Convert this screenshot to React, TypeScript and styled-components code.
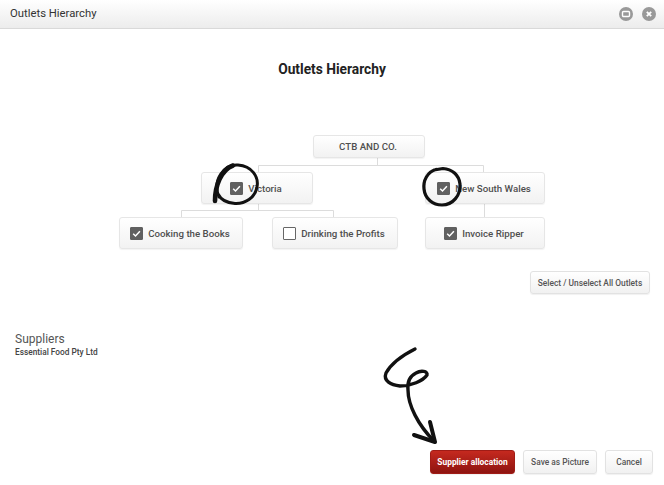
import React from "react";
import styled, { createGlobalStyle } from "styled-components";

const Global = createGlobalStyle`
  html, body { margin: 0; padding: 0; background: #fff; }
  body { font-family: Roboto, "Liberation Sans", sans-serif; color: #333; }
`;

const Page = styled.div`
  position: relative;
  width: 664px;
  height: 485px;
  overflow: hidden;
  display: flex;
  flex-direction: column;
  background: #fff;
`;

const Header = styled.header`
  height: 29px;
  flex: none;
  display: flex;
  align-items: center;
  justify-content: space-between;
  padding: 0 8px 1px 10px;
  box-sizing: border-box;
  background: linear-gradient(#ffffff, #ececec);
  border-bottom: 1px solid #d9d9d9;
`;

const HeaderTitle = styled.div`
  font-size: 11.3px;
  color: #333;
`;

const HeaderActions = styled.div`
  display: flex;
  gap: 9.5px;
`;

const RoundIcon = styled.svg`
  width: 14px;
  height: 14px;
  display: block;
`;

const Main = styled.main`
  flex: 1;
  display: flex;
  flex-direction: column;
`;

const Heading = styled.h1`
  margin: 31px 0 0;
  height: 18px;
  line-height: 18px;
  text-align: center;
  font-size: 13.75px;
  font-weight: 700;
  color: #222;
`;

const Diagram = styled.div`
  position: relative;
  height: 114px;
  margin-top: 57px;
  flex: none;
`;

const Lines = styled.svg`
  position: absolute;
  inset: 0;
  width: 664px;
  height: 114px;
`;

const Node = styled.div<{ $x: number; $y: number; $w: number; $h: number }>`
  position: absolute;
  left: ${(p) => p.$x}px;
  top: ${(p) => p.$y}px;
  width: ${(p) => p.$w}px;
  height: ${(p) => p.$h}px;
  box-sizing: border-box;
  display: flex;
  align-items: center;
  justify-content: center;
  gap: 5px;
  padding-right: 2px;
  background: linear-gradient(#ffffff, #f2f2f2);
  border: 1px solid #e6e6e6;
  border-radius: 3px;
  box-shadow: 0 1px 1px rgba(0, 0, 0, 0.05);
  font-size: 9.7px;
  font-weight: 500;
  color: #4f4f4f;
  white-space: nowrap;
`;

const Box = styled.span<{ $checked: boolean }>`
  width: 13px;
  height: 13px;
  box-sizing: border-box;
  flex: none;
  border-radius: 1px;
  display: flex;
  background: ${(p) => (p.$checked ? "#606060" : "#fff")};
  border: 1px solid ${(p) => (p.$checked ? "#606060" : "#666")};
`;

const BoxTick = styled.svg`
  width: 11px;
  height: 11px;
  display: block;
`;

const SelectRow = styled.div`
  display: flex;
  justify-content: flex-end;
  padding-right: 14px;
  margin-top: 22px;
`;

const Button = styled.button<{ $primary?: boolean; $w: number; $h: number }>`
  width: ${(p) => p.$w}px;
  height: ${(p) => p.$h}px;
  padding: 0;
  box-sizing: border-box;
  font-family: inherit;
  font-size: ${(p) => (p.$primary ? 8.4 : 8.4)}px;
  font-weight: ${(p) => (p.$primary ? 700 : 500)};
  border-radius: 3px;
  white-space: nowrap;
  color: ${(p) => (p.$primary ? "#fff" : "#555")};
  background: ${(p) =>
    p.$primary ? "linear-gradient(#c5291f, #8e1410)" : "linear-gradient(#ffffff, #f1f1f1)"};
  border: 1px solid ${(p) => (p.$primary ? "#a01c16" : "#e2e2e2")};
  box-shadow: 0 1px 1px rgba(0, 0, 0, 0.06);
`;

const Suppliers = styled.section`
  margin: 38px 0 0 15px;
`;

const SuppliersTitle = styled.div`
  font-size: 12px;
  line-height: 15px;
  color: #555;
`;

const SuppliersItem = styled.div`
  font-size: 8.3px;
  line-height: 11px;
  font-weight: 500;
  color: #444;
`;

const Footer = styled.footer`
  margin-top: auto;
  margin-bottom: 11px;
  padding-right: 11px;
  display: flex;
  justify-content: flex-end;
  gap: 8px;
`;

const Ink = styled.svg`
  position: absolute;
  inset: 0;
  width: 664px;
  height: 485px;
  pointer-events: none;
`;

const Check = ({ checked = true }: { checked?: boolean }) => (
  <Box $checked={checked}>
    {checked && (
      <BoxTick viewBox="0 0 11 11">
        <path d="M2.2 5.8 L4.5 8 L8.9 3.2" fill="none" stroke="#fff" strokeWidth="1.5" />
      </BoxTick>
    )}
  </Box>
);

export default function App() {
  return (
    <Page>
      <Global />
      <Header>
        <HeaderTitle>Outlets Hierarchy</HeaderTitle>
        <HeaderActions>
          <RoundIcon viewBox="0 0 14 14">
            <circle cx="7" cy="7" r="7" fill="#999" />
            <rect x="3.5" y="4.5" width="7" height="5" rx="1" fill="none" stroke="#fff" strokeWidth="1.4" />
          </RoundIcon>
          <RoundIcon viewBox="0 0 14 14">
            <circle cx="7" cy="7" r="7" fill="#999" />
            <path d="M4.8 4.8 L9.2 9.2 M9.2 4.8 L4.8 9.2" stroke="#fff" strokeWidth="1.8" />
          </RoundIcon>
        </HeaderActions>
      </Header>
      <Main>
        <Heading>Outlets Hierarchy</Heading>
        <Diagram>
          <Lines viewBox="0 0 664 114">
            <path
              d="M377.5 23 V30.5 M258.5 37 V30.5 H483.5 V37 M258.5 69 V75.5 M181.5 82 V75.5 H333.5 V82 M484.5 69 V82"
              fill="none"
              stroke="#dcdcdc"
            />
          </Lines>
          <Node $x={313} $y={0} $w={112} $h={23}>CTB AND CO.</Node>
          <Node $x={201} $y={37} $w={112} $h={32}><Check />Victoria</Node>
          <Node $x={425} $y={37} $w={120} $h={32}><Check />New South Wales</Node>
          <Node $x={119} $y={82} $w={124} $h={32}><Check />Cooking the Books</Node>
          <Node $x={272} $y={82} $w={126} $h={32}><Check checked={false} />Drinking the Profits</Node>
          <Node $x={425} $y={82} $w={120} $h={32}><Check />Invoice Ripper</Node>
        </Diagram>
        <SelectRow>
          <Button $w={120} $h={23}>Select / Unselect All Outlets</Button>
        </SelectRow>
        <Suppliers>
          <SuppliersTitle>Suppliers</SuppliersTitle>
          <SuppliersItem>Essential Food Pty Ltd</SuppliersItem>
        </Suppliers>
        <Footer>
          <Button $primary $w={85} $h={24}>Supplier allocation</Button>
          <Button $w={74} $h={24}>Save as Picture</Button>
          <Button $w={48} $h={24}>Cancel</Button>
        </Footer>
      </Main>
      <Ink viewBox="0 0 664 485">
        <g fill="none" stroke="#111" strokeLinecap="round" strokeLinejoin="round">
          <path d="M215 201 C215 186 221 170 233 165.5" strokeWidth="4.6" />
          <path d="M219 197 C212 180 224 164 238 165 C252 166 259 177 257 187 C255 198 245 204 235 203.5 C227 203 221 200 218 194" strokeWidth="3" />
          <path d="M436 169.5 C427 172 423 181 424 189 C425 199 433 205 442 205 C453 205 461 195 460 184 C459 175 452 169 443 168.5 L434 170" strokeWidth="3.2" />
          <path d="M415 349 C403 355 391 364 386 373 C383 381 391 385 400 386 C411 386 423 381 427 375 C428 371 421 370 416 373 C410 376 407 381 408 390 C408 405 418 425 434 441" strokeWidth="3.4" />
          <path d="M414 435 L435 442 L430 422" strokeWidth="4" />
        </g>
      </Ink>
    </Page>
  );
}
